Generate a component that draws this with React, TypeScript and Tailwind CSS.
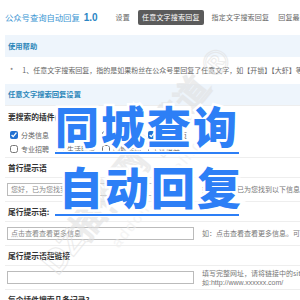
import React from "react";

const tabs = ["设置", "任意文字搜索回复", "指定文字搜索回复", "回复最新信息"];

const checkRows = [
  [
    { name: "分类信息", on: true },
    { name: "二手交易", on: false },
    { name: "房产信息", on: false },
    { name: "商家黄页", on: true },
  ],
  [
    { name: "专业招聘", on: false },
    { name: "生活服务", on: false },
    { name: "同城活动", on: false },
    { name: "优惠券", on: false },
  ],
];

function LabelRow({ children }: { children: React.ReactNode }) {
  return (
    <div className="flex h-[20px] items-center border-t border-[#eeeeee] pl-[3px] text-[7.75px] font-bold text-[#333]">
      {children}
    </div>
  );
}

function FieldRow({
  value,
  hint,
}: {
  value: string;
  hint: React.ReactNode;
}) {
  return (
    <div className="flex h-[24px] items-center gap-[8px] border-t border-[#eeeeee] pl-[2px]">
      <div className="flex h-[13px] w-[187px] shrink-0 items-center border border-[#bbbbbb] bg-white px-[3px] text-[7px] text-[#888]">
        {value}
      </div>
      <div className="whitespace-nowrap text-[7px] leading-[9px] text-[#777]">
        {hint}
      </div>
    </div>
  );
}

export default function App() {
  return (
    <div className="relative h-[300px] w-[300px] overflow-hidden bg-white font-['Noto_Sans_CJK_SC',sans-serif] text-[#555]">
      {/* top bar */}
      <div className="flex h-[35px] items-center whitespace-nowrap pl-[5px]">
        <span className="text-[8.3px] text-[#3b95d3]">公众号查询自动回复</span>
        <span className="ml-[4px] font-['Liberation_Sans',sans-serif] text-[10px] font-bold text-[#2a86c4]">
          1.0
        </span>
        <div className="ml-[17px] flex items-center gap-[7px] text-[7px] tracking-[0.2px] text-[#666]">
          {tabs.map((t, i) =>
            i === 1 ? (
              <span
                key={t}
                className="rounded-[2px] bg-[#5b5b5b] px-[4px] py-[2px] text-white"
              >
                {t}
              </span>
            ) : (
              <span key={t} className="px-[1px]">
                {t}
              </span>
            )
          )}
        </div>
      </div>

      <div className="ml-[5px]">
        <div className="flex h-[22px] items-center bg-[#eef5fc] pl-[3px] text-[7.3px] font-bold text-[#2a86b9]">
          使用帮助
        </div>
        <div className="flex h-[27px] items-center whitespace-nowrap pl-[5px] text-[7px] text-[#666]">
          <span className="mr-[9px]">*</span>
          1、任意文字搜索回复，指的是如果粉丝在公众号里回复了任意文字，如【开锁】【大虾】等
        </div>
        <div className="flex h-[21px] items-center bg-[#eef5fc] pl-[3px] text-[7.3px] font-bold text-[#2a86b9]">
          任意文字搜索回复设置
        </div>

        <div className="flex h-[22px] items-center border-t border-[#eeeeee] pl-[3px] text-[7.75px] font-bold text-[#333]">
          要搜索的插件(最多选3个)
        </div>
        <div className="flex h-[30px] flex-col justify-center gap-[4px] pl-[5px]">
          {checkRows.map((row, r) => (
            <div key={r} className="flex items-center text-[7px] text-[#666]">
              {row.map((c) => (
                <label key={c.name} className="flex w-[46px] items-center gap-[3px]">
                  <input
                    type="checkbox"
                    defaultChecked={c.on}
                    className="m-0 h-[8px] w-[8px] accent-[#2271d1]"
                  />
                  {c.name}
                </label>
              ))}
            </div>
          ))}
        </div>

        <LabelRow>首行提示语</LabelRow>
        <FieldRow value="您好，已为您找到以下信息" hint="如：您好，已为您找到以下信息" />
        <LabelRow>尾行提示语:</LabelRow>
        <FieldRow value="点击查看查看更多信息" hint="如：点击查看查看更多信息。可以不填" />
        <LabelRow>尾行提示语超链接</LabelRow>
        <FieldRow
          value=""
          hint={
            <>
              <div>填写完整网址，请将链接中的site</div>
              <div className="font-['Liberation_Sans',sans-serif]">如:http://www.xxxxxx.com/</div>
            </>
          }
        />
        <LabelRow>每个插件搜索几条记录?</LabelRow>
      </div>

      {/* watermark */}
      <div className="pointer-events-none absolute left-[145px] top-[168px] flex -translate-x-1/2 -translate-y-1/2 -rotate-[51deg] flex-col items-center whitespace-nowrap text-[#eeeeee] opacity-60">
        <span className="font-['Liberation_Sans',sans-serif] text-[34px] font-bold [-webkit-text-stroke:1px_#e0e0e0] [color:transparent]">
          DZ插件网 | 贰道 ®
        </span>
        <span className="font-['Liberation_Sans',sans-serif] text-[15px] tracking-[2px]">
          addon.dismall.com
        </span>
      </div>

      {/* title overlay */}
      <div className="pointer-events-none absolute left-[55px] top-[103px] flex w-[184px] flex-col whitespace-nowrap font-['Noto_Sans_CJK_SC',sans-serif] font-black leading-none text-[#2d7ff6]">
        <div className="text-[44px] tracking-[2px] [paint-order:stroke_fill] [-webkit-text-stroke:5px_white]">
          同城查询
        </div>
        <div className="mt-[4px] box-content h-[2px] border-y border-white bg-[#2d7ff6]" />
        <div className="mt-[9px] pl-[4px] text-[44px] tracking-[2px] [paint-order:stroke_fill] [-webkit-text-stroke:5px_white]">
          自动回复
        </div>
        <div className="mt-[5px] box-content h-[2px] border-y border-white bg-[#2d7ff6]" />
      </div>
    </div>
  );
}
